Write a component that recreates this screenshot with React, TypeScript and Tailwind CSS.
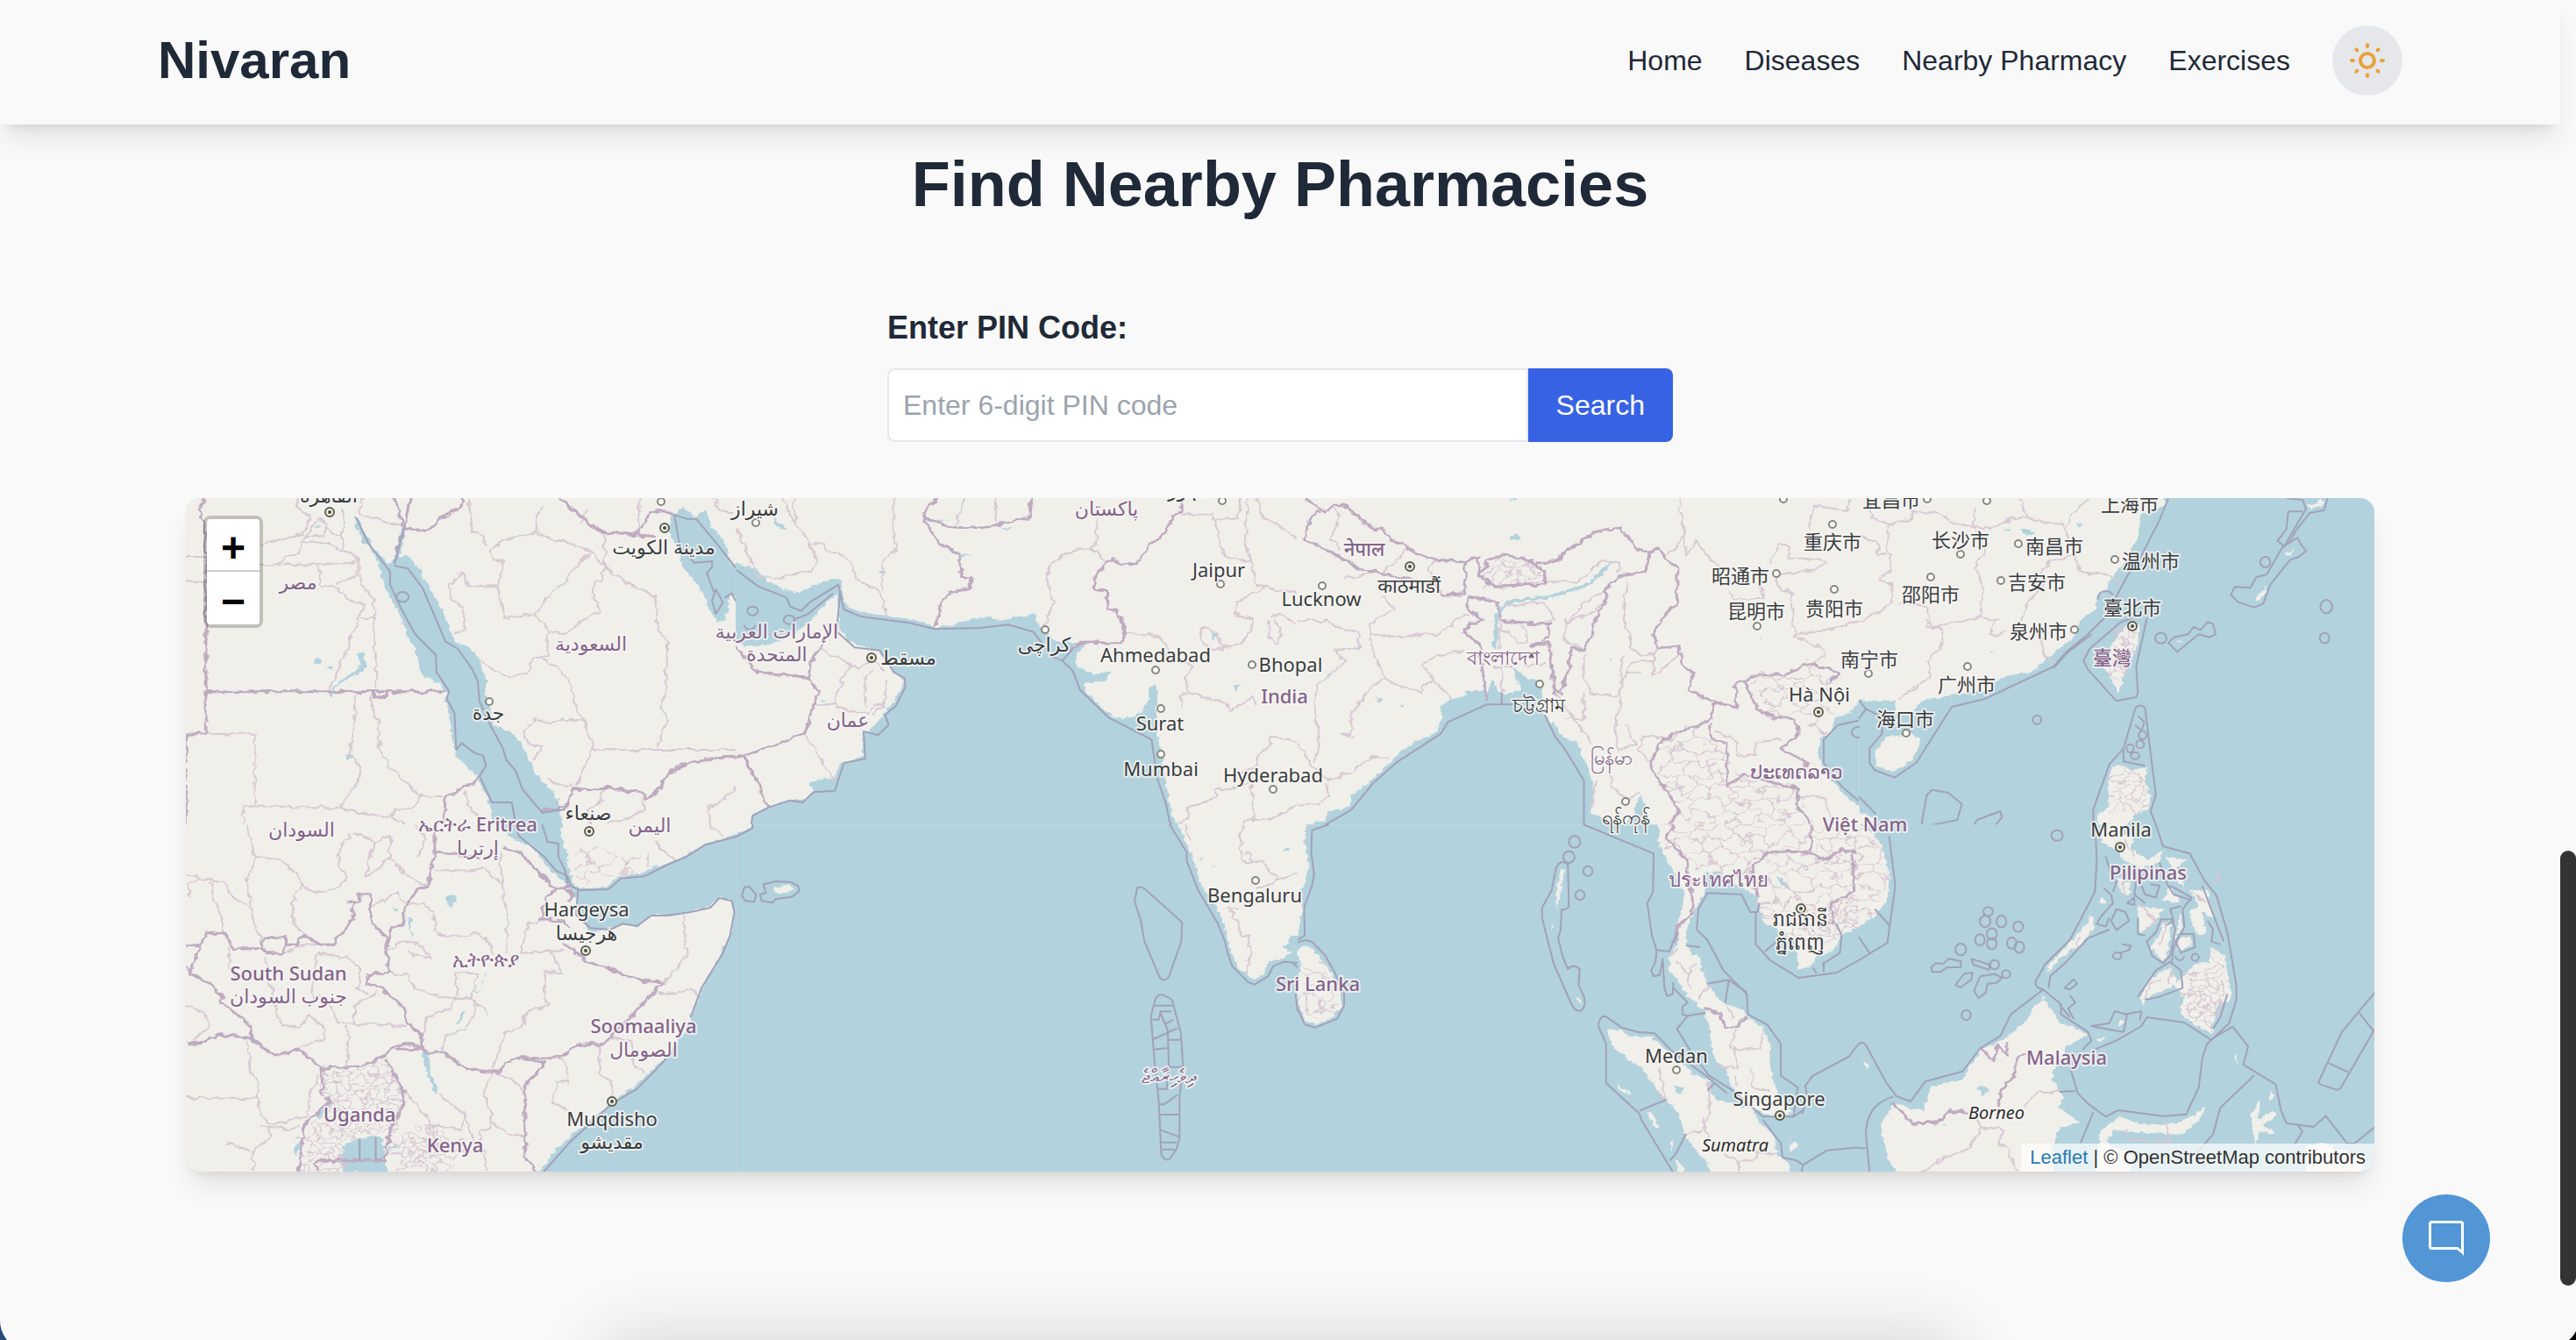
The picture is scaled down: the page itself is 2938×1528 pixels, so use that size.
import React from "react";

const NAV_LINKS = ["Home", "Diseases", "Nearby Pharmacy", "Exercises"];

type Tile = {
  x: number;
  y: number;
  water: boolean;
  land?: string;
  sea?: string;
  lake?: string;
  mesh?: string;
  fineMesh?: string;
  country?: string;
  region?: string;
  maritime?: string;
};

/* Each tile covers 640 x 400 map units and is drawn on its own 1568 x 1200 grid. */
const TILES: Tile[] = [
  {
    x: 200,
    y: 560,
    water: false,
    sea: "M500 80L515 100 522 135 540 160 550 195 600 248 612 235 622 190 632 125 642 122 632 200 625 225 650 225 680 260 700 310 730 370 750 420 770 480 780 515 810 525 850 570 870 650 865 690 880 740 890 800 940 825 970 870 1000 950 1040 1010 1070 1060 1080 1150H890L880 1080 860 1010 840 970 785 910 770 830 768 770 752 720 760 690 740 660 690 630 672 570 670 535 650 500 625 420 590 340 575 280 560 220 525 170 502 115ZM1390 80L1420 55 1450 90 1480 62 1500 130 1530 160 1550 240 1590 280V385L1550 350 1538 440 1515 450 1490 400 1480 360 1450 310 1415 250 1400 180 1375 130ZM1490 1202L1590 1160V1202Z",
    lake: "M385 575L400 570 408 592 390 590ZM420 600L440 600 436 612ZM510 560L525 545 535 600 520 620 500 630 470 650 450 665 440 700 430 705 445 665 475 635 505 615 518 590ZM475 905L500 900 482 922ZM385 125L410 112 400 125Z",
    country: "M80 20L68 62 85 130 86 830 30 832V1140M86 686H760M548 690L560 705 590 702 592 690M612 20L638 122 612 245M655 20L640 128 705 140 745 90 805 45 800 20M1068 20L1185 138 1340 155M1290 148L1325 75 1360 68 1390 80M1568 905L1430 930 1380 965 1340 1035 1320 1052 1300 1030 1200 1015 1110 1022 1095 1080 1025 1095M750 1140L755 1045 780 1040 790 1020 830 1000 850 975",
    region: "M345 20L340 55 380 85 355 150 295 165 240 185M468 60V210M400 95L425 110 410 150 360 160ZM470 150L440 150 420 120M520 88L560 90 600 110 635 112M525 20L515 85M355 170L430 180 460 205 495 215 515 240 520 320 555 370 560 680M290 250L310 225 345 210 355 170M235 255L510 245M400 260L410 325 440 325 490 375 530 390 515 430M30 225H86M30 308H86M510 250L510 290 450 320M430 683L510 450V435H556M505 690L500 780 490 900 515 940 515 985 460 1080M30 830H222V1075M190 1140L195 1078 450 1082 520 1100 600 1115 610 1088 665 1086 685 1040 750 1045M550 690L548 740 570 790 570 880 600 950 650 1000 685 1042M1030 50L1010 80 1010 145 920 165 880 200 890 230 915 240 910 290 900 325 820 325 800 278 760 330 770 370 805 400 808 480 775 485M820 20L830 140 850 140 870 190M1010 145L1060 165 1090 175 1160 205 1185 240 1200 260 1190 310 1170 310 1165 345 1185 410 1130 445 1095 490 1040 485 1035 455 1000 420 1160 210M900 325L920 435 1000 420M1040 485L1040 560 1000 570 985 620 935 640 880 605 855 580M1020 565L1080 620 1105 660 1120 750 1145 790 1165 880 1120 1010M1200 150L1200 260 1270 320 1340 360 1350 480 1375 520 1370 690 1360 740 1375 790 1345 878M1165 880L1215 885H1568M1145 785L1085 780 1050 795 1005 775 970 830 990 870 1025 870 1000 920M1150 60L1130 110M1300 20L1290 140M1500 20L1520 60 1560 80M1310 1035L1310 1090 1270 1120 1210 1135M1200 1025L1190 1060 1150 1100 1160 1140M1040 980L1060 1000 1110 1010M1568 1010L1530 1060 1490 1080 1495 1140M810 1030L820 1080 850 1120M610 1090L605 1120 640 1140",
    maritime: "M505 90L540 180 600 275 600 320 630 400 670 490 728 560 730 620 765 685 758 710 780 760 785 885 800 862 835 895 860 905 868 940 850 975 885 1065 940 1065 950 1130M612 255L650 265 690 330 715 400 755 515 790 540 830 610 845 650 850 720 880 800 915 880 925 920 950 955 970 1020 1025 1100 1090 1088M640 125L612 250M618 362a16 16 0 1 0 34 0a16 16 0 1 0 -34 0M1390 80L1430 95 1455 95 1500 160 1568 265M1395 85L1410 190 1450 245 1500 240 1500 260 1485 280 1505 345M1510 335L1500 375 1510 420 1530 380 1510 335M1535 365L1555 350 1568 380",
  },
  {
    x: 840,
    y: 560,
    water: false,
    sea: "M-20 235L0 245 50 265 90 310 140 340 175 350 220 320 270 300 292 302 300 380 320 405 380 420 440 430 500 440 555 468 590 460 650 440 700 430 740 445 800 425 835 420 845 460 870 490 890 510 950 520 975 522 960 545 945 580 950 600 1000 630 1045 615 1030 650 970 660 980 690 1010 730 1050 770 1080 780 1130 760 1150 720 1155 665 1172 665 1175 760 1180 860 1190 900 1200 1000 1215 1100 1240 1150 1255 1202H-20V1195L0 1185 40 1150 45 1110 90 1080 150 1055 190 1060 215 1030 205 1005 230 985 275 980 290 930 355 910 350 830 375 820 400 780 440 720 470 650 440 620 400 550 355 530 310 510 290 470 280 350 250 385 210 440 170 480 130 510 60 530 20 530 -4 510 -20 490Z",
    lake: "M100 95L130 115 145 135 115 120ZM555 98L600 97 570 103ZM735 124L780 124 750 132ZM620 215L658 218 630 226ZM398 272L415 275 402 285ZM1385 665L1408 658 1395 690ZM1325 480L1345 485 1330 515ZM238 714L250 718 240 722Z",
    country: "M560 20L518 88 570 185 622 212 628 292 655 295 648 335 600 345 575 375 555 470M520 90L605 124 690 125 755 110 820 88 825 20M1245 20L1245 70 1220 85 1190 155 1155 180 1130 240 1075 255 1050 232 1030 250 1000 300 1000 330 1035 345 1040 405 1065 410 1085 490 1075 518 960 520 930 550M0 530L55 617 203 638 228 688 190 832 22 905 0 910M22 905L88 1082M203 638L210 590 235 530 245 500",
    region: "M128 20L160 105 205 175 210 205 228 235 210 275 165 280 125 300 60 290 30 210 0 130M205 175L245 180 250 205 300 220 325 260 330 295 405 350 423 440M440 20V160L450 195 410 235 410 340M160 20L165 105M640 20L612 125M725 20V105M1010 95L1005 170 990 195 940 202 880 245 868 300 885 380 860 470M990 195L1035 245M1430 20L1420 180 1440 240 1450 320M1245 80H1330L1345 145 1360 225 1440 240M1410 20L1400 90 1330 100M1450 20L1470 90 1530 130 1568 165M1450 320L1480 325 1400 380 1390 420 1440 435 1435 475 1415 520 1370 530 1330 545 1295 510 1300 470 1340 480 1360 545M1085 490H1165L1200 520 1205 565 1275 600 1255 640 1260 690 1240 700 1245 740M1260 690L1370 725 1380 750 1440 705 1455 735M1480 330L1568 350M1490 430L1520 420 1560 450M1490 440L1485 500 1510 520 1525 490 1500 440M1568 860L1540 850 1490 840 1490 870 1460 900 1450 950 1400 960M1430 1000L1380 1020 1340 1020 1340 1050 1265 1080 1260 1120 1235 1135M1440 1000L1445 1120 1415 1130 1420 1200M1445 1125L1500 1120 1568 1070M190 832L270 985M235 535L265 560 340 608 380 575 420 615M320 590L280 690 280 740 370 765 385 730 410 735M380 610L355 650 365 740M220 735L280 725M420 640L410 720 385 765",
    maritime: "M0 270L60 325 140 365 150 395 180 410 205 380 245 350 285 320 300 405 350 430 480 450 555 472 680 468 760 457 830 482 850 515 880 565 910 580 940 540M910 580L940 615 960 680 1040 775 1160 850 1175 980 1200 1070 1210 1130 1245 1200M290 340L280 480 330 535 400 545 440 620 470 640 472 670 445 735 415 765 425 800 395 835 355 822 360 915 300 930 275 1025 215 1030 185 1065 150 1058 90 1082 45 1110 40 1150 0 1185M30 410a14 14 0 1 0 30 0a14 14 0 1 0 -30 0M132 440a14 14 0 1 0 30 0a14 14 0 1 0 -30 0M22 458a14 14 0 1 0 30 0M160 440L200 420 270 350",
  },
  {
    x: 1480,
    y: 560,
    water: false,
    sea: "M18 1202L25 1150 50 1130 75 1130 85 1095 145 1080 150 1040 200 1000 250 940 290 890 340 850 380 830 405 780 400 735 430 710 465 705 470 685 520 680 530 690 545 640 560 690 600 690 625 680 600 600 640 640 680 650 685 720 690 770 720 800 740 840 780 860 800 920 820 980 830 1060 815 1100 860 1120 900 1160 940 1100 955 1035 975 1080 980 1120 1000 1170 1005 1202ZM1590 700L1540 760 1500 780 1490 830 1465 840 1455 900 1470 960 1500 1000 1530 1040 1572 1085 1590 1100Z",
    lake: "M545 540L552 420 575 380 620 368 700 358 760 335 810 315 850 265 890 235 855 280 815 325 765 345 700 368 625 378 580 390 562 425 556 540ZM590 160L612 145 625 165 605 170ZM590 25L615 25 600 32ZM870 575L878 572 876 585ZM215 700L240 715 225 720ZM165 525L180 530 168 538ZM1288 490L1293 508 1290 508ZM285 725L298 732 292 738Z",
    fineMesh: "M515 285L560 225 640 232 690 285 685 325 520 322Z",
    mesh: "M1010 860L1060 830 1140 800 1165 850 1200 870 1200 1000 1250 970 1400 1000 1395 1060 1440 1150H1030L1070 1090 1000 960ZM1260 640L1430 590 1510 620 1480 740 1500 780 1460 840 1400 780 1330 770Z",
    country: "M22 20L80 75 100 45 130 48 210 130 240 130 260 170 300 185 330 210 385 235 470 240 505 228 512 290 545 325 690 318 690 275 660 250 640 232 570 218 530 240 508 295M665 245L715 245 750 205 830 140 905 125 950 200 985 215 970 280 900 290 860 335 860 375 830 440 820 500 800 545 762 535 760 600 735 690 715 680 705 520 650 530M470 240L465 350 405 355 380 320 235 280 180 270 100 215 20 165 30 100 60 65M985 215L1000 195 1035 235 1060 265 1062 380 1030 420 995 480 1005 540 1065 530 1075 590 1105 620 1090 680 1160 720 1225 740 1225 660 1250 650 1260 690 1290 750 1320 770 1390 780 1400 830 1350 880 1425 930 1400 960M1250 650L1280 630 1360 630 1430 590 1510 620 1490 655M530 720L505 520 465 485 480 455 520 445 470 395 480 360 530 375 560 380 565 445 705 455 700 500 650 530M705 520L720 700M1160 725L1160 780 1110 805 1060 825 1010 860 985 945 1040 1040 1065 1095 1040 1140 1030 1200M1150 800L1160 855 1200 860 1200 1010 1250 965 1290 985 1400 1020 1395 1080 1440 1140",
    region: "M95 50L115 85 95 160 120 200M305 190L275 240 235 280M385 235L365 265 385 320M130 300L230 275M0 440L80 445 110 465 170 485 175 540 105 545 130 580 60 660 45 720 60 860 45 930M0 860L40 940 85 990 160 955 210 905 250 915M235 360L270 405 205 450 205 530 240 640 200 680 150 760 150 830 120 830 165 845M205 490L290 500 360 490 400 490 450 435 480 420M345 590L400 560 470 545M345 590L385 650 350 660 345 690 270 655 240 640M350 660L380 650 430 710M60 1070L90 1040 80 1000M0 1070H60M580 395L640 380 690 385 720 440 690 445M750 440L745 510 800 540M690 310L780 310 850 240 900 240 895 280M860 340L800 380 760 440M920 310L910 420 935 540 960 560 1000 550M860 370L830 410 750 450M1065 24L1080 150 1050 205 1030 215M1080 150L1090 220 1110 170 1160 240 1180 260M1320 250L1345 185 1375 185 1370 230 1420 230 1480 240 1450 270 1340 285 1335 320 1380 350 1385 450 1390 500 1465 535 1470 570 1430 595M1210 340L1215 370 1300 365 1290 300M1568 440L1500 470 1390 490M1430 130L1445 50 1530 65 1550 30M800 560L800 640 820 695 895 700 930 590 1000 580 1000 540M905 560L905 700 890 800 895 890M800 690V780L745 780M920 800L945 870 900 880M820 860L780 790 720 690M1065 560L1010 620 990 630 1000 560M920 620L960 620M565 450V540M630 460L640 520 610 515 590 480 565 480M570 600V720M545 600L600 600M960 835L955 890 995 940M960 835L1050 850 1090 800M835 990L820 1080M870 940L880 1010 920 1060 950 1030M690 590L640 600 630 560M1350 850L1280 860 1280 900 1230 910 1230 860 1170 820M1400 1045H1470L1500 1150",
    maritime: "M38 1200V1160L80 1140 150 1090 210 1000 280 925 400 830 420 790 528 730H610M570 690V728M690 765L720 840 745 880 800 990 800 1155 900 1200M760 1185a18 18 0 0 1 30 0M1568 785L1510 800 1470 850 1470 930 1520 1010 1568 1060M1548 825a18 18 0 1 0 36 0a18 18 0 1 0 -36 0",
  },
  {
    x: 2120,
    y: 560,
    water: true,
    land: "M-20 -20H860L855 50 790 80 780 150 750 230 710 290 690 340 660 370 665 400 620 440 600 500 560 540 510 590 480 620 420 630 380 650 370 680 300 690 230 705 170 720 150 760 130 770 105 760 100 715 50 720 -4 715 -20 710ZM80 840L150 830 175 850 150 920 95 960 50 940 45 890ZM750 455L785 460 780 520 750 600 725 692 710 650 685 600 710 520ZM710 940L740 940 760 955 805 945 800 1000 815 1040 810 1090 770 1110 750 1140 760 1202H680L665 1110 700 1080 695 1000ZM-20 1090L30 1110 50 1130 60 1202H-20ZM1255 50L1290 30 1300 45 1265 62ZM1190 215L1220 195 1200 225ZM1105 375L1140 325 1135 350 1110 380ZM780 770L785 780 778 785ZM885 512L910 508 900 518Z",
    lake: "M450 125L480 130 490 150 460 148ZM605 115L632 110 615 122ZM400 130L430 132 415 138ZM365 545L380 548 370 556Z",
    fineMesh: "M710 940L740 940 800 950 810 1090 700 1110ZM725 480L780 480 770 560 722 680 700 600Z",
    region: "M30 90L85 115 80 200 90 270 60 300 95 320 90 380 50 420 0 445M85 115L150 95 150 70 220 75 260 105 290 115 360 130 430 95 470 90 450 24M320 60L325 130 355 205 325 260 345 330 340 430 190 470 195 400 165 385 110 385M470 90L510 105 570 115 580 150 605 230 620 275 700 290 735 315M580 130L600 70 645 24M605 220L540 240 515 260 520 310 490 360 470 380 455 450M340 430L385 440 360 495 420 485M235 480L225 540 195 580 200 630 160 670 105 715M0 155L50 170 55 215 75 215M180 440L235 475M510 500L510 545 540 590M30 24L40 90",
    maritime: "M865 24L840 100 790 220 750 290 720 360 690 430 640 490 580 550 545 600 350 712 260 738 160 930 100 980 45 955 30 930 30 880 65 830V800M545 605L585 550 650 490M765 432L730 450 645 540 628 580 640 610 720 718 775 705 780 690 775 600 805 435M0 715L20 745 0 778M20 745L60 770M773 742L740 880 700 935 655 1090V1202M800 742L830 1040 815 1095 850 1200M773 742Q788 725 800 742M740 885V925L800 940M205 1022L250 1032 288 1070 275 1125 175 1150 178 1120 190 1040ZM318 1150L330 1125 395 1095 400 1115 375 1155 340 1165ZM538 1178a16 18 0 1 0 32 0a16 18 0 1 0 -32 0M486 782a12 15 0 1 0 24 0a12 15 0 1 0 -24 0M0 1045L48 1105M85 1150L90 1200M1195 24L1240 30 1250 60 1200 165 1190 190 1170 170 1195 130 1200 70 1240 70M1310 24L1300 65 1260 75 1225 130 1200 180M1225 160L1240 190 1250 205 1230 225 1205 235 1150 320 1130 385 1105 398 1060 380 1040 355 1050 328 1095 330 1110 295 1140 285 1185 190ZM1122 243a14 18 0 1 0 28 0a14 18 0 1 0 -28 0M1290 395a16 22 0 1 0 33 0a16 22 0 1 0 -33 0M1288 503a13 17 0 1 0 27 0a13 17 0 1 0 -27 0M828 503a16 18 0 1 0 32 0a16 18 0 1 0 -32 0M865 520L880 500 920 490 935 465 955 475 975 448 990 455 997 490 980 500 950 490 920 520 890 550ZM670 370a18 18 0 0 1 40 -14M782 835a8 10 0 1 0 22 0a8 10 0 1 0 -22 0M772 800L790 820 798 790 780 770M748 880a10 14 0 1 0 20 0a10 14 0 1 0 -20 0M775 866a10 12 0 1 0 22 0a10 12 0 1 0 -22 0M760 905a12 12 0 1 0 24 0a12 12 0 1 0 -24 0",
  },
  {
    x: 200,
    y: 940,
    water: false,
    sea: "M885 -20L890 0 945 50 1000 80 1040 150 1080 190 1105 215 1120 260 1140 340 1165 370 1210 358 1250 340 1290 350 1330 310 1380 310 1440 300 1490 280 1520 250 1555 260 1560 300 1555 370 1535 410 1510 480 1480 540 1465 590 1440 650 1430 700 1390 770 1350 820 1280 900 1220 950 1160 1010 1100 1070 1050 1130 1012 1200 1000 1220H1595V20L1530 50 1480 70 1430 100 1390 130 1340 145 1300 170 1240 180 1200 215 1150 220 1115 215 1100 160 1095 100 1078 40 1080 -20Z",
    lake: "M755 248L785 240 785 262 770 285 760 265ZM605 280L622 292 610 298ZM650 320L662 325 655 360 665 385 655 375ZM690 780H708L712 850 735 910 728 920 705 860ZM470 1100L500 1080 550 1065 580 1075 590 1188H470L462 1140ZM395 1000L430 940 440 950 415 990 400 1010ZM330 1110L345 1085 352 1110 335 1130ZM590 1100L632 1102 600 1110ZM800 640L812 635 800 670 785 690ZM850 540L860 532 855 545ZM738 765L752 768 742 774ZM865 510L872 512 866 520ZM838 572L856 565 842 578Z",
    fineMesh: "M415 830L500 830 590 800 640 920 630 980 590 1060 480 1080 470 1188H345L350 1080 420 980 410 930ZM600 1070L700 1030 800 1080 760 1188H620Z",
    mesh: "M1110 60L1200 90 1320 110 1240 180 1120 210Z",
    country: "M30 420L70 410 85 375 135 370 165 425 240 425 245 385 308 388 305 440 255 440 245 425M308 415H340L345 390 360 380 410 415 438 415 498 325V265H485L515 262V243H545V330L590 390 590 430 600 430M725 0L725 90 705 210 680 215 645 280 635 345 605 350 590 430 598 505 540 515 535 545 570 555 640 630 645 680 690 720V770L620 768M725 95L770 100 850 115M910 80L960 95 1060 220 1105 210M1060 220L1040 250 1020 325 1085 330 1100 355M1085 210L1110 240 1100 265M1085 405L1150 470 1310 535 1365 540M1365 540L1200 748 1120 755 1080 795 1035 802 965 797 920 815 900 850 815 838 750 782 690 775M965 797L1015 815H1035L977 895V1140L1010 1188M690 770L660 745 605 765 560 810 520 828 410 835 345 770 275 790 205 730 115 720 85 745 30 750M120 600L210 690 213 735M30 490L40 510 100 545 135 600M70 410L40 510M410 835V925M590 800L600 830 640 920 635 970 600 1050 585 1150H390M420 930L430 950 360 1030 345 1188M390 1155L400 1188",
    region: "M200 0L222 110 200 200 215 320 240 400M222 110L290 120 330 160 355 205 325 270 330 340 365 380M355 205L380 230 420 230 455 215 480 180 455 130 455 90 490 35M500 30L560 60 540 120 535 180 570 150 600 110 640 170 700 210M560 60L600 40 600 110M670 0L700 50 680 110M540 290L620 230 645 280M30 170L70 185 130 195 160 250 200 275M100 200L110 260 130 320 130 370M40 250V200L70 180M150 420L150 490 180 530M250 455L270 560 285 650M290 450L340 420 400 410M380 620L395 440 480 455 515 490 510 560 535 580M400 580L420 600 455 680 640 690M500 685L500 620 560 575M480 690V825M285 650L300 690 345 695 370 650 410 690 415 730 350 765M200 740L210 840 235 880 230 930 195 940 30 935M230 930L240 1000 265 1030 370 1000 375 920 400 860M240 1035L330 1045 350 1030M265 1035L260 1080 215 1120 220 1188M145 1090L190 1110 210 1120M30 620L80 640 95 690 50 740M730 160L800 160 860 150 910 200M910 90L915 250 930 300 925 440M655 275L690 270 720 300 730 370M600 430L630 400 680 405 715 460 650 440M730 375L790 385 850 375 880 410 890 450M600 510L650 515 670 560 740 590 830 600 870 640 870 660M785 510H845L830 590 785 600ZM830 600L840 640 810 700 755 725 745 775M780 595L770 630 700 660 695 720M985 335L1040 330M985 335L965 440 1080 430M1050 430L1080 510 1035 500 1030 590 1040 620 980 640 970 690 920 715 885 850M1420 305L1428 460 1365 540M1350 575L1400 580 1440 560 1465 590M1275 740L1280 820 1310 850M1215 730L1280 745M1180 750L1190 860 1218 880 1220 945M1085 800L1098 880 1065 880 1055 950 1115 1000M885 850L860 920 885 990 880 1040 850 1050 870 1188M885 1020L930 1060 977 1070M900 850L960 890 977 930M640 910L690 980 720 1030 800 1045 810 990 770 960 735 920M720 1040L730 1110 830 1120M810 1000L830 1080 870 1120M1340 60L1400 130M1490 0L1530 45M1320 100V145",
    maritime: "M950 0L960 40 1030 110 1065 160 1095 175 1105 210 1130 225 1210 222 1245 185 1310 178 1380 135 1430 110 1480 70 1568 42M1025 0L1040 60 1070 65 1070 110 1090 160 1095 205M1125 225L1120 310 1160 355 1215 360 1250 340 1290 348 1330 312 1375 312 1440 300 1495 285 1520 252 1555 262 1562 300 1550 380M1550 380L1530 440 1470 560 1440 660M1395 770L1350 830 1290 905 1220 955 1100 1090 1030 1188M515 1075V1150M560 1070V1150",
  },
  {
    x: 840,
    y: 940,
    water: true,
    land: "M1230 -20L1235 0 1255 60 1280 130 1295 200 1340 280 1365 350 1375 410 1395 480 1430 522 1445 532 1475 510 1485 470 1530 455 1550 440 1530 420 1550 380 1590 380V-20ZM100 218L150 208 165 223 140 235 115 235ZM-20 -20H40L40 12 -4 36 -20 40Z",
    lake: "M1295 108L1305 112 1302 128ZM1335 140L1338 150 1334 150ZM1530 85L1545 84 1538 95ZM1550 400L1568 390V440L1550 430Z",
    region: "M1420 0L1405 45 1415 130 1440 130 1440 100 1420 100M1440 130L1470 125 1505 180 1500 205 1450 220M1505 190L1568 168M1370 285L1405 290M1375 290L1400 330 1410 380 1430 380 1435 430 1425 515M1255 0L1265 55",
    maritime: "M1210 0L1258 95 1258 125 1290 225 1345 340 1365 400 1370 430 1385 485 1430 540 1448 548 1485 520 1500 485 1530 470 1568 475M45 0L45 12 0 42M1120 218Q1130 210 1142 222L1245 335 1243 400 1208 522Q1196 542 1183 525L1140 400 1130 330 1112 262ZM1168 610Q1175 575 1195 585L1217 600 1242 715 1248 830 1238 930V1070L1230 1110 1212 1142Q1198 1156 1187 1130L1180 950 1168 810 1158 655ZM1168 620H1218M1162 668H1180L1185 640H1215M1185 645L1205 705 1208 825 1202 905H1175M1165 735L1232 697M1200 683L1220 668M1205 737H1242M1168 770L1205 765M1208 830H1246M1180 958H1195L1232 925M1180 993H1238M1185 1045L1238 1070M1185 1088H1230M1188 1112H1225M75 205L110 195 150 197 172 210 176 228 155 248 108 256 100 268 70 262 66 240 82 235ZM15 245L22 215 35 213 55 240 50 265 25 262ZM1555 475L1568 490M1562 580L1568 640",
  },
  {
    x: 1480,
    y: 940,
    water: true,
    land: "M1005 -20L1010 60 1030 120 1060 180 1080 230 1075 290 1060 340 1065 400 1040 450 1040 500 1060 530 1080 570 1110 610 1140 640 1150 690 1155 740 1165 800 1200 850 1215 900 1250 950 1300 990 1350 1000 1385 985 1350 930 1330 880 1320 800 1320 750 1300 700 1270 670 1240 630 1200 620 1180 600 1150 560 1130 500 1125 450 1100 445 1085 400 1090 340 1120 270 1140 230 1130 170 1180 160 1200 190 1250 220 1285 250 1300 330 1340 360 1390 400 1400 495 1440 480 1450 450 1500 430 1520 380 1590 340V-20ZM865 705L900 705 930 725 990 730 1020 760 1060 800 1100 850 1150 880 1160 930 1220 960 1270 970 1290 1020 1330 1060 1340 1130 1370 1160 1380 1200H1165L1130 1140 1080 1060 1060 980 1020 930 1000 900 960 830 920 800 880 760ZM890 890L935 920 925 925 895 902ZM975 985L990 990 1012 1040 1000 1040ZM1055 1150L1070 1155 1085 1200H1065ZM1040 1090L1050 1080 1045 1120ZM1380 1085L1400 1100 1375 1120ZM10 415L40 420 70 470 100 520 120 580 120 630 90 665 50 685 20 670 5 620 -4 560 10 480 -4 440ZM-20 -20H25L20 60 32 160 10 230 15 300 -4 380 -20 385ZM735 150L745 160 735 230 725 290 720 280 728 200ZM708 340L716 345 712 362ZM780 590L790 600 786 618Z",
    lake: "M1052 890L1080 905 1075 925 1060 915ZM1340 175L1378 215 1370 220 1345 200Z",
    mesh: "M1010 0H1568V340L1400 440 1300 300 1260 210 1140 160 1040 100ZM10 470L70 480 110 560 110 640 50 680 10 620Z",
    fineMesh: "M1400 360L1460 280 1568 240V350L1500 400Z",
    country: "M1050 0L1030 45 1085 120 1100 230 1108 285 1065 350 1050 405M1568 100L1520 85 1470 120 1410 90 1310 95 1265 160 1285 250M1440 0L1435 95M1550 100L1555 230 1490 270 1495 330 1460 350M1140 630L1180 650 1195 695 1235 685 1255 660",
    region: "M1065 420L1045 450M1060 470L1090 510 1115 480M1090 510L1095 560M1120 600L1150 545M1200 625L1220 660M1225 700L1210 770 1290 768 1300 700M1170 830L1230 830 1220 760M1225 860V890H1235M1270 830V900L1320 910M1010 830L1020 900 1030 940M1150 880V990L1130 1050 1085 1060M1130 1000L1150 1080 1180 1100M1190 1130L1230 1150 1270 1150 1290 1120 1340 1130M1230 1150V1188M1000 910L1030 945M85 480L60 470M25 580V640M65 590V650",
    maritime: "M88 0L40 20 38 100 46 170 40 210 18 285 20 380 0 395M0 405Q20 390 40 402L75 445 105 510 130 580V620L110 665 50 695 20 685 0 630M798 0L995 100 993 230 977 270 990 380 1003 430 1038 435 1060 370M1003 430L1000 470 988 500 995 520 1012 515 1020 460 1025 560 1032 588 1048 580 1050 540M1050 560L1090 610 1075 625 1075 650 1090 655 1140 645M1090 655L1060 700 1100 780 1150 860 1215 910 1300 1000 1385 1000 1398 900 1350 860V750L1312 685 1258 650 1255 580 1190 500 1145 395 1115 360 1120 290 1145 235 1240 240 1265 300 1285 300 1290 270M1280 300V410L1320 465 1400 525 1505 508 1568 465M1305 435L1340 400M1385 1000L1410 980M840 690Q845 650 862 658L905 695 950 710 998 715 1045 775 1130 850 1200 920M840 690L862 750V885L955 990 960 1010 1048 1188M955 980L1030 942M1085 1060L1055 1130 1040 1150M1165 885L1145 910M1568 750L1540 795 1440 860 1418 895 1425 930 1410 990M1300 1010L1330 1060 1350 1090 1355 1140 1395 1150 1412 1165 1408 1188M1412 1165L1480 1115 1568 1105M1085 415L1125 420M1145 545L1205 532 1255 575M1205 532L1195 610M1505 340L1520 380 1515 440 1465 480M1440 490L1450 510M1470 470V505M758 60a16 20 0 1 0 32 0a16 20 0 1 0 -32 0M742 112a16 20 0 1 0 32 0a16 20 0 1 0 -32 0M798 160a13 17 0 1 0 26 0a13 17 0 1 0 -26 0M776 242a13 16 0 1 0 26 0a13 16 0 1 0 -26 0M722 150Q735 115 755 138L758 280Q752 295 738 290L735 360 728 390 740 450 755 495Q770 475 788 495L785 550 800 590Q808 625 790 638 775 640 765 615L715 475 683 320V285L710 225Z",
  },
  {
    x: 2120,
    y: 940,
    water: true,
    land: "M-20 -20L40 30 70 90 85 180 80 260 40 320 -4 350 -20 355ZM515 600L545 640 560 680 600 690 640 720 580 760 570 800 540 850 545 880 570 930 560 970 620 1020 560 1040 540 1110V1200H120L85 1160 70 1100 60 1030 95 955 180 980 200 900 290 870 340 770 400 740 430 710 470 670 490 620ZM670 1095L680 1040 730 1000 770 1020 860 1030 900 1020 965 970 955 1010 900 1060 800 1055 710 1045 690 1090 760 1130V1200H660ZM1150 908L1162 930 1145 948ZM1120 940L1125 970 1110 1010 1160 980 1165 1000 1130 1030 1170 1062 1120 1050 1110 1100 1095 1000ZM1250 1100L1300 1085 1330 1110 1420 1130 1400 1200H1250ZM680 -20L680 60 720 40 750 -20ZM680 60L720 40 770 30 760 90 810 120 850 90 840 130 790 150 740 120 720 90ZM720 180L760 200 755 240 735 235ZM860 110L915 120 890 150 910 220 895 200ZM680 245L690 270 672 270ZM650 310L660 350 620 410 560 460 530 505 525 490 570 430 620 370ZM780 280L850 290 830 330 785 375ZM850 335L875 345 860 450 850 470 815 420 840 380ZM870 215L900 270 850 260ZM895 390L930 385 930 420 890 430ZM925 225L975 225 990 320 960 300 970 380 940 370 920 300 950 280ZM985 420L1020 450 1035 540 1040 600 1000 620 985 720 900 650 905 590 880 550 800 600 790 620 785 590 810 530 870 490 890 540 940 480 980 470ZM1052 780L1058 800 1055 830ZM980 830L990 850ZM10 810L30 820 20 835ZM510 585L522 590 515 600ZM730 670L750 680 725 690ZM665 735L690 725 680 745ZM900 300L905 350 880 400Z",
    lake: "M330 900L350 895 365 910 345 930ZM235 1025L242 1030 236 1032Z",
    mesh: "M-4 -4H60L85 180 50 310 -4 340Z",
    fineMesh: "M905 530L1000 430 1035 560 1030 600 980 710 910 640Z",
    country: "M95 950L150 1025 230 1015 250 980 310 985M385 960L410 885 430 870 438 800 470 780M340 765L375 808 390 755 415 795 410 740",
    region: "M335 1010L340 1045 385 1035 405 1050 390 1090 415 1110 440 1188M340 1045L305 1110 240 1140 180 1188M460 970L490 920 560 915M720 60L740 100M740 190V240M790 280L830 330 800 360M860 340L840 420M930 230L970 270M870 500V540M800 600L810 550 850 535M745 1040L755 1080 870 1085M870 1085V1060L850 1005M900 1100V1140H1010M1000 170V200M620 380L600 430M740 50L770 110",
    maritime: "M85 40L102 210 80 405 0 465M45 290L85 345M0 385L30 440M660 0L665 120 660 230 590 395 520 480 495 535Q490 560 515 565L425 650 395 725 340 765 290 845 185 880 145 948 105 930 75 880 20 755Q10 740 0 752M515 565L565 615V650L640 710 650 740 625 770M590 830L612 920 640 955 690 1000 725 978 850 998 915 992 950 900 960 800 972 755 985 735 1045 692 1088 760 1075 822 1165 890 1180 980 1195 1022 1270 1035 1305 998 1365 1092H1385L1442 1035M660 770L720 740 790 690 805 660 910 678 985 738 1035 680 1055 600V550L1030 370 1000 245 965 190 925 100 850 75 830 0M560 615L590 660M95 932Q20 960 20 1060L30 1188M0 1108H20M560 915L605 912M655 985L620 1090M1105 858L1010 970 990 1060 940 1130M1225 1028L1240 1050 1215 1100M1442 575L1350 710 1285 880Q1285 890 1295 892L1335 908Q1345 908 1350 895L1442 700M1398 645L1440 710M1310 815L1368 848M530 560L535 520 580 470 640 390 700 360M600 530L610 545 590 565 575 560ZM590 585L605 610 585 630 600 665M685 220L705 240 710 270 680 310 665 340 690 350 700 320M720 290L745 300 755 330 720 362 705 330ZM735 410L760 415 755 430 730 440M710 450a12 12 0 1 0 24 0a12 12 0 1 0 -24 0M538 38a16 18 0 1 0 32 0a16 18 0 1 0 -32 0M348 298a13 15 0 1 0 27 0a13 15 0 1 0 -27 0M385 332a13 20 0 1 0 27 0a13 20 0 1 0 -27 0M432 350a13 17 0 1 0 27 0a13 17 0 1 0 -27 0M338 332a13 17 0 1 0 30 0a13 17 0 1 0 -30 0M358 375a12 17 0 1 0 28 0a12 17 0 1 0 -28 0M325 395a12 17 0 1 0 27 0a12 17 0 1 0 -27 0M358 408a12 17 0 1 0 27 0a12 17 0 1 0 -27 0M414 406a12 17 0 1 0 27 0a12 17 0 1 0 -27 0M435 420a12 17 0 1 0 27 0a12 17 0 1 0 -27 0M270 428a15 20 0 1 0 30 0a15 20 0 1 0 -30 0M287 652a13 17 0 1 0 26 0a13 17 0 1 0 -26 0M400 512a11 13 0 1 0 23 0a11 13 0 1 0 -23 0M367 480a12 15 0 1 0 25 0a12 15 0 1 0 -25 0M202 490L215 475 235 478 250 460 285 468 285 488 245 490 230 505 205 505ZM315 460L365 480 365 498 320 480ZM270 550L295 510 318 508 315 530 285 558ZM330 545L340 520 380 512 400 525 385 542 360 545 355 575 335 595 322 570ZM800 380L780 375 780 320M870 210L930 250 905 290 910 350 880 420 875 470M650 690L700 680 715 640 750 650 740 710 690 700ZM740 650L790 640 785 670M960 210L1000 340 1020 400M1030 580L1010 660 990 700M780 590L830 500 870 470 900 500 905 560 840 590 800 600M780 180L800 240 830 250 840 210 815 205M780 150L770 240 800 270M840 130L860 200 880 240 930 260M690 110L700 150 720 200 710 230M860 345L880 330 870 290 900 280M885 450a12 15 0 1 0 24 0M930 455a9 11 0 1 0 20 0a9 11 0 1 0 -20 0M975 330L990 360 985 400 1010 410M885 400L900 375 935 375 940 420 900 440ZM805 400L830 370 845 325 875 325 885 360 870 450 850 475 820 450ZM750 270L770 250 770 275Z",
  },
];

type Kind = "city" | "country" | "island";

const LABELS: [string, number, number, Kind][] = [
  ["القاهرة", 375, 573, "city"],
  ["مصر", 340, 672, "country"],
  ["السعودية", 674, 742, "country"],
  ["مدينة الكويت", 757, 632, "city"],
  ["جدة", 557, 821, "city"],
  ["صنعاء", 671, 935, "city"],
  ["اليمن", 741, 949, "country"],
  ["ኤርትራ Eritrea", 545, 948, "country"],
  ["إرتريا", 545, 975, "country"],
  ["السودان", 344, 954, "country"],
  ["Hargeysa", 669, 1045, "city"],
  ["هرجيسا", 669, 1072, "city"],
  ["ኢትዮጵያ", 554, 1102, "country"],
  ["South Sudan", 329, 1118, "country"],
  ["جنوب السودان", 329, 1144, "country"],
  ["Soomaaliya", 734, 1178, "country"],
  ["الصومال", 734, 1205, "country"],
  ["Muqdisho", 698, 1284, "city"],
  ["مقديشو", 698, 1310, "city"],
  ["Uganda", 410, 1279, "country"],
  ["Kenya", 519, 1314, "country"],
  ["شیراز", 861, 588, "city"],
  ["پاکستان", 1262, 588, "country"],
  ["لاہور", 1356, 567, "city"],
  ["Jaipur", 1390, 658, "city"],
  ["Lucknow", 1507, 691, "city"],
  ["Ahmedabad", 1318, 755, "city"],
  ["کراچی", 1191, 743, "city"],
  ["Bhopal", 1472, 766, "city"],
  ["India", 1465, 802, "country"],
  ["Surat", 1323, 833, "city"],
  ["Mumbai", 1324, 885, "city"],
  ["Hyderabad", 1452, 892, "city"],
  ["Bengaluru", 1431, 1029, "city"],
  ["الإمارات العربية", 886, 728, "country"],
  ["المتحدة", 886, 754, "country"],
  ["مسقط", 1036, 758, "city"],
  ["عمان", 967, 829, "country"],
  ["नेपाल", 1556, 634, "country"],
  ["काठमाडौं", 1607, 676, "city"],
  ["বাংলাদেশ", 1714, 758, "country"],
  ["চট্টগ্রাম", 1755, 812, "city"],
  ["မြန်မာ", 1838, 872, "country"],
  ["ရန်ကုန်", 1854, 940, "city"],
  ["ປະເທດລາວ", 2049, 888, "country"],
  ["Việt Nam", 2127, 948, "country"],
  ["Hà Nội", 2075, 800, "city"],
  ["昭通市", 1985, 665, "city"],
  ["昆明市", 2003, 705, "city"],
  ["重庆市", 2090, 626, "city"],
  ["贵阳市", 2092, 702, "city"],
  ["南宁市", 2132, 760, "city"],
  ["宜昌市", 2157, 578, "city"],
  ["长沙市", 2236, 624, "city"],
  ["南昌市", 2343, 631, "city"],
  ["上海市", 2429, 583, "city"],
  ["温州市", 2453, 648, "city"],
  ["吉安市", 2323, 672, "city"],
  ["邵阳市", 2202, 686, "city"],
  ["臺北市", 2432, 701, "city"],
  ["泉州市", 2325, 728, "city"],
  ["臺灣", 2409, 758, "country"],
  ["广州市", 2243, 789, "city"],
  ["海口市", 2173, 828, "city"],
  ["Manila", 2419, 954, "city"],
  ["Pilipinas", 2450, 1003, "country"],
  ["Malaysia", 2357, 1214, "country"],
  ["Borneo", 2277, 1276, "island"],
  ["ประเทศไทย", 1960, 1011, "country"],
  ["រាជធានី", 2053, 1056, "city"],
  ["ភ្នំពេញ", 2053, 1083, "city"],
  ["Medan", 1912, 1212, "city"],
  ["Singapore", 2029, 1261, "city"],
  ["Sumatra", 1979, 1313, "island"],
  ["Sri Lanka", 1503, 1130, "country"],
  ["ދިވެހިރާއްޖެ", 1333, 1235, "country"],
];

const CAPITALS: [number, number][] = [
  [376, 584], [758, 602], [672, 948], [668, 1084], [698, 1256], [994, 750],
  [1608, 646], [2074, 812], [2432, 714], [2418, 966], [2054, 1036], [2030, 1272],
];

const TOWNS: [number, number][] = [
  [558, 800], [862, 596], [1392, 666], [1508, 668], [1318, 764], [1192, 718],
  [1428, 758], [1324, 808], [1324, 860], [1452, 900], [1756, 780], [1854, 914],
  [2026, 654], [2004, 714], [2090, 598], [2092, 672], [2131, 768], [2034, 569],
  [2198, 569], [2266, 571], [2236, 632], [2302, 620], [2412, 638], [2282, 662],
  [2202, 658], [2366, 718], [2244, 760], [2174, 836], [1912, 1220], [1394, 571],
  [1432, 1004], [754, 572],
];

const LABEL_STYLE: Record<Kind, string> = {
  city: "fill-[#3a3e40]",
  country: "fill-[#83648a] font-medium",
  island: "fill-[#2f2f2f] text-[20px] italic",
};

function MapTile({ tile }: { tile: Tile }) {
  return (
    <g transform={`translate(${tile.x} ${tile.y}) scale(${640 / 1568} ${1 / 3})`} clipPath={`url(#tile-${tile.y})`}>
      {tile.water ? null : <rect x="-3" width="1574" height="1200" fill="#f0efea" />}
      <g filter="url(#rough)">
        {tile.land && <path d={tile.land} fill="#f0efea" />}
        {tile.sea && <path d={tile.sea} fill="#b2d2dd" />}
        {tile.lake && <path d={tile.lake} fill="#b2d2dd" />}
      </g>
      {(tile.mesh || tile.fineMesh) && (
        <g filter="url(#rough-mesh)">
          {tile.mesh && <path d={tile.mesh} fill="url(#mesh)" />}
          {tile.fineMesh && <path d={tile.fineMesh} fill="url(#mesh-fine)" />}
        </g>
      )}
      <g filter="url(#rough-line)" fill="none" strokeLinejoin="round">
        {tile.region && <path d={tile.region} stroke="#d8c9d3" strokeWidth="2" vectorEffect="non-scaling-stroke" />}
        {tile.country && <path d={tile.country} stroke="#bfabc0" strokeWidth="3" vectorEffect="non-scaling-stroke" />}
      </g>
      {tile.maritime && (
        <path d={tile.maritime} fill="none" stroke="#a1a2ba" strokeWidth="2" strokeLinejoin="round" vectorEffect="non-scaling-stroke" />
      )}
    </g>
  );
}

function WorldMap() {
  return (
    <svg
      viewBox="212 568 2496 768"
      preserveAspectRatio="xMidYMid slice"
      className="block h-full w-full bg-[#b2d2dd]"
      role="img"
      aria-label="Map of pharmacies"
    >
      <defs>
        <clipPath id="tile-560">
          <rect x="-2" y="0" width="1572" height="1141" />
        </clipPath>
        <clipPath id="tile-940">
          <rect x="-2" y="-2" width="1572" height="1204" />
        </clipPath>
        <filter id="rough" filterUnits="userSpaceOnUse" x="-30" y="-30" width="1630" height="1260" colorInterpolationFilters="sRGB">
          <feTurbulence type="fractalNoise" baseFrequency="0.06" numOctaves="2" seed="4" />
          <feDisplacementMap in="SourceGraphic" scale="18" xChannelSelector="R" yChannelSelector="G" />
        </filter>
        <filter id="rough-line" filterUnits="userSpaceOnUse" x="-30" y="-30" width="1630" height="1260" colorInterpolationFilters="sRGB">
          <feTurbulence type="fractalNoise" baseFrequency="0.04" numOctaves="2" seed="9" />
          <feDisplacementMap in="SourceGraphic" scale="22" xChannelSelector="R" yChannelSelector="G" />
        </filter>
        <filter id="rough-mesh" filterUnits="userSpaceOnUse" x="-30" y="-30" width="1630" height="1260" colorInterpolationFilters="sRGB">
          <feTurbulence type="fractalNoise" baseFrequency="0.02" numOctaves="3" seed="5" />
          <feDisplacementMap in="SourceGraphic" scale="80" xChannelSelector="R" yChannelSelector="G" />
        </filter>
        <pattern id="mesh" width="72" height="84" patternUnits="userSpaceOnUse">
          <path d="M0 14L36 0 72 14V42L36 56 0 42ZM36 56V84" fill="none" stroke="#d6c5d1" strokeWidth="4" />
        </pattern>
        <pattern id="mesh-fine" width="36" height="48" patternUnits="userSpaceOnUse">
          <path d="M0 8L18 0 36 8V24L18 32 0 24ZM18 32V48" fill="none" stroke="#d6c5d1" strokeWidth="4" />
        </pattern>
      </defs>

      {TILES.map((tile) => (
        <MapTile key={`${tile.x}-${tile.y}`} tile={tile} />
      ))}

      {TOWNS.map(([x, y]) => (
        <circle key={`${x}-${y}`} cx={x} cy={y} r="4" fill="#fbfbf8" stroke="#87887f" strokeWidth="2" />
      ))}
      {CAPITALS.map(([x, y]) => (
        <g key={`${x}-${y}`}>
          <circle cx={x} cy={y} r="5" fill="#f0efe0" stroke="#5f6055" strokeWidth="2" />
          <circle cx={x} cy={y} r="2" fill="#4a4b42" />
        </g>
      ))}

      <g
        textAnchor="middle"
        stroke="#f7f5f3"
        strokeOpacity="0.8"
        strokeWidth="4"
        strokeLinejoin="round"
        paintOrder="stroke"
        className="font-['Noto_Sans','Noto_Sans_CJK_SC','DejaVu_Sans',sans-serif] text-[22px]"
      >
        {LABELS.map(([text, x, y, kind]) => (
          <text key={`${text}-${x}`} x={x} y={y} className={LABEL_STYLE[kind]}>
            {text}
          </text>
        ))}
      </g>
    </svg>
  );
}

function SunIcon() {
  return (
    <svg viewBox="0 0 40 40" className="size-10" fill="none" stroke="#e9a23b" strokeWidth="4" strokeLinecap="round" aria-hidden="true">
      <circle cx="20" cy="20" r="8" />
      <path d="M20 2V4M20 36V38M2 20H4M36 20H38M7.4 7.4L8.4 8.4M31.6 31.6L32.6 32.6M7.4 32.6L8.4 31.6M31.6 8.4L32.6 7.4" />
    </svg>
  );
}

function Header() {
  return (
    <header className="relative z-10 bg-[#f9f9f9] shadow-[0_20px_30px_-6px_rgba(0,0,0,0.1),0_8px_12px_-8px_rgba(0,0,0,0.1)]">
      <div className="mx-auto flex h-[142px] max-w-[2560px] items-center justify-between pb-1">
        <a href="#home" className="text-[60px] leading-[72px] font-bold">
          Nivaran
        </a>
        <nav className="flex items-center gap-12 text-[32px] leading-[48px]">
          {NAV_LINKS.map((label) => (
            <a key={label} href={`#${label.toLowerCase().replace(" ", "-")}`}>
              {label}
            </a>
          ))}
          <button type="button" aria-label="Switch theme" className="grid size-20 place-items-center rounded-full bg-[#e5e7eb]">
            <SunIcon />
          </button>
        </nav>
      </div>
    </header>
  );
}

function PinSearch() {
  return (
    <form className="mx-auto mt-24 max-w-[896px]" onSubmit={(e) => e.preventDefault()}>
      <label htmlFor="pin" className="block text-[36px] leading-[56px] font-bold">
        Enter PIN Code:
      </label>
      <div className="mt-[18px] flex h-[84px]">
        <input
          id="pin"
          type="text"
          placeholder="Enter 6-digit PIN code"
          className="min-w-0 flex-1 rounded-l-lg border-2 border-[#e5e7eb] bg-white px-4 text-[32px] placeholder:text-[#9ca3af]"
        />
        <button type="submit" className="rounded-r-lg bg-[#3762e3] px-8 text-[32px] text-white">
          Search
        </button>
      </div>
    </form>
  );
}

function MapPanel() {
  return (
    <section className="relative h-[768px] overflow-hidden rounded-2xl">
      <WorldMap />
      <div className="absolute top-5 left-5 flex w-[68px] flex-col overflow-hidden rounded-lg border-4 border-black/20 bg-clip-padding text-[48px] font-bold text-black">
        <button type="button" aria-label="Zoom in" className="flex h-[60px] items-center justify-center border-b-2 border-[#cccccc] bg-white pt-2 leading-none">
          +
        </button>
        <button type="button" aria-label="Zoom out" className="flex h-[60px] items-center justify-center bg-white pt-2 leading-none">
          −
        </button>
      </div>
      <p className="absolute right-0 bottom-0 bg-white/70 px-[10px] text-[22px] leading-8 text-[#333333]">
        <a href="#leaflet" className="text-[#2a7ab0]">
          Leaflet
        </a>{" "}
        | © OpenStreetMap contributors
      </p>
    </section>
  );
}

function ChatButton() {
  return (
    <button
      type="button"
      aria-label="Open chat"
      className="fixed right-[98px] bottom-[66px] z-20 grid size-[100px] place-items-center rounded-full bg-[#5296d6]"
    >
      <svg viewBox="0 0 40 40" className="size-10" fill="none" stroke="white" strokeWidth="3" aria-hidden="true">
        <path d="M3.5 1.5H36.5Q38.5 1.5 38.5 3.5V36L33 31.5H3.5Q1.5 31.5 1.5 29.5V3.5Q1.5 1.5 3.5 1.5Z" />
        <path d="M33 30H40V40Z" fill="white" stroke="none" />
        <path d="M33 30L37 30V33Z" fill="#5296d6" stroke="none" />
      </svg>
    </button>
  );
}

export default function App() {
  return (
    <div className="relative flex h-screen overflow-hidden bg-[#f9f9f9] font-['Liberation_Sans',Arial,sans-serif] text-[#1f2937]">
      <div className="min-w-0 flex-1">
        <Header />
        <main className="mx-auto max-w-[2560px] px-8 pt-7">
          <h1 className="text-center text-[72px] leading-20 font-bold">Find Nearby Pharmacies</h1>
          <PinSearch />
          <div className="mt-16 rounded-2xl shadow-[0_20px_30px_-6px_rgba(0,0,0,0.1),0_8px_12px_-8px_rgba(0,0,0,0.1)]">
            <MapPanel />
          </div>
        </main>
        <footer className="mx-auto mt-48 h-40 max-w-[1540px] bg-[#f9f9f9] shadow-[0_0_80px_rgba(0,0,0,0.16)]" />
      </div>
      <div className="flex w-[18px] flex-col pt-[970px]" aria-hidden="true">
        <div className="h-[496px] rounded-full bg-[#333333]" />
      </div>
      <ChatButton />
      <svg viewBox="0 0 8 22" className="absolute bottom-0 left-0 h-[22px] w-2 fill-[#274a77]" aria-hidden="true">
        <path d="M0 0Q0 12 8 22H0Z" />
      </svg>
      <svg viewBox="0 0 8 10" className="absolute right-0 bottom-0 h-[10px] w-2 fill-black" aria-hidden="true">
        <path d="M8 0Q5 6 0 10H8Z" />
      </svg>
    </div>
  );
}
